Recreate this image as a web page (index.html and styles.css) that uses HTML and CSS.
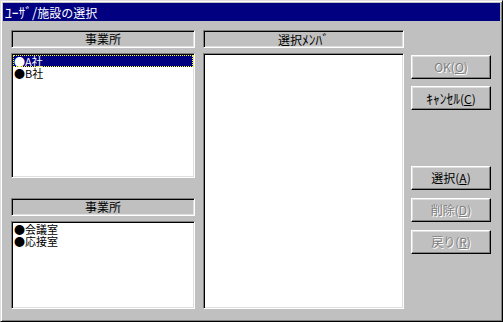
FILE: index.html
```html
<!DOCTYPE html>
<html lang="ja">
<head>
  <meta charset="UTF-8">
  <title>ﾕｰｻﾞ/施設の選択</title>
  <link rel="stylesheet" href="styles.css">
</head>
<body>
  <div class="window">
    <div class="titlebar"><span class="hw">ﾕｰｻﾞ/</span>施設の選択</div>
    <div class="content">
      <div class="col col-left">
        <div class="header">事業所</div>
        <ul class="listbox list-top">
          <li class="selected">●A社</li>
          <li>●B社</li>
        </ul>
        <div class="header header-second">事業所</div>
        <ul class="listbox list-bottom">
          <li>●会議室</li>
          <li>●応接室</li>
        </ul>
      </div>
      <div class="col col-mid">
        <div class="header">選択<span class="hw">ﾒﾝﾊﾞ</span></div>
        <ul class="listbox list-members"></ul>
      </div>
      <div class="col col-buttons">
        <button class="btn" disabled>OK(<u>O</u>)</button>
        <button class="btn btn-cancel"><span class="hw">ｷｬﾝｾﾙ</span>(<u>C</u>)</button>
        <button class="btn btn-select">選択(<u>A</u>)</button>
        <button class="btn btn-gap" disabled>削除(<u>D</u>)</button>
        <button class="btn btn-gap" disabled>戻り(<u>R</u>)</button>
      </div>
    </div>
  </div>
</body>
</html>
```

FILE: styles.css
```css
body {
  margin: 0;
  background: #c0c0c0;
  font-family: "Noto Sans CJK JP", "Liberation Sans", sans-serif;
  font-size: 12px;
}
/* Kana demi-chasse : un peu plus gros pour ressembler à la police bitmap */
.hw { font-size: 13.5px; }
.window {
  width: 503px;
  height: 322px;
  box-sizing: border-box;
  background: #c0c0c0;
  border: 1px solid;
  border-color: #dfdfdf #000 #000 #dfdfdf;
  box-shadow: inset 1px 1px #fff, inset -1px -1px #808080;
  padding: 2px;
  display: flex;
  flex-direction: column;
}
.titlebar {
  height: 18px;
  line-height: 18px;
  background: #000080;
  color: #fff;
  padding-left: 2px;
}
.content {
  flex: 1;
  display: flex;
  gap: 8px;
  padding: 9px 9px 10px 8px;
}
.col {
  display: flex;
  flex-direction: column;
}
.col-left { width: 184px; }
.col-mid { width: 201px; }
.col-buttons {
  width: 80px;
  margin-left: -1px;
  padding-top: 25px;
}
/* Cadres enfoncés */
.header, .listbox {
  box-sizing: border-box;
  border: 1px solid;
  border-color: #808080 #fff #fff #808080;
  box-shadow: inset 1px 1px #000, inset -1px -1px #dfdfdf;
}
.header {
  height: 18px;
  line-height: 16px;
  text-align: center;
  color: #000;
  flex-shrink: 0;
}
.header-second { margin-top: 20px; }
.listbox {
  list-style: none;
  margin: 5px 0 0;
  padding: 1px;
  background: #fff;
}
.list-top { height: 125px; flex-shrink: 0; }
.list-bottom, .list-members { flex: 1; }
.listbox li {
  height: 12px;
  line-height: 12px;
  font-size: 11px;
  padding-left: 1px;
  color: #000;
}
.listbox li.selected {
  background: #000080;
  color: #fff;
  outline: 1px dotted #ffff00;
  outline-offset: -1px;
}
/* Boutons */
.btn {
  height: 24px;
  width: 80px;
  padding: 0;
  font: inherit;
  line-height: 20px;
  color: #000;
  background: #c0c0c0;
  border: 1px solid;
  border-color: #fff #000 #000 #fff;
  box-shadow: inset -1px -1px #808080, inset 1px 1px #dfdfdf;
  flex-shrink: 0;
}
.btn:disabled {
  color: #808080;
  text-shadow: 1px 1px #fff;
}
.btn-cancel { margin-top: 7px; }
.btn-select { margin-top: 56px; }
.btn-gap { margin-top: 8px; }
```
